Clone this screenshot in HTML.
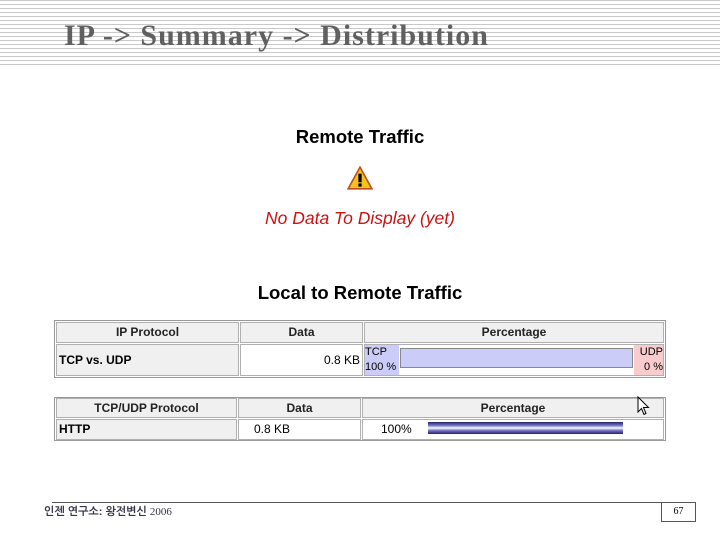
<!DOCTYPE html>
<html><head><style>
body{margin:0;width:720px;height:540px;background:#fff;position:relative;overflow:hidden;font-family:"Liberation Sans",sans-serif;}
.stripes{position:absolute;left:0;top:0;width:720px;height:66px;background:repeating-linear-gradient(to bottom,#c8c8c8 0,#c8c8c8 1px,#fff 1px,#fff 4px);}
.title{position:absolute;left:64px;top:18px;font-family:"Liberation Serif",serif;font-weight:bold;font-size:30px;letter-spacing:1px;color:#606060;line-height:36px;white-space:nowrap;}
.abs{position:absolute;}
.cell{position:absolute;box-sizing:border-box;border:1px solid #b0b0b0;font-size:12px;white-space:nowrap;}
.hd{background:#f0f0f0;font-weight:bold;text-align:center;color:#222;}
</style></head><body>
<div class="stripes"></div>
<div class="title">IP -&gt; Summary -&gt; Distribution</div>
<div class="abs" style="left:0;width:720px;top:126px;text-align:center;font-weight:bold;font-size:18.5px;color:#000">Remote Traffic</div>
<svg class="abs" style="left:347px;top:166px" width="26" height="24" viewBox="0 0 24 22"><path d="M12 1 L23 21 L1 21 Z" fill="#f7c21d" stroke="#c0501c" stroke-width="1.5"/><rect x="10.5" y="7" width="3" height="8" fill="#000"/><rect x="10.5" y="16" width="3" height="3" fill="#000"/></svg>
<div class="abs" style="left:0;width:720px;top:208px;text-align:center;font-style:italic;font-size:17.5px;color:#cc1111">No Data To Display (yet)</div>
<div class="abs" style="left:0;width:720px;top:282px;text-align:center;font-weight:bold;font-size:18.5px;color:#000">Local to Remote Traffic</div>
<div class="abs" style="left:54px;top:320px;width:612px;height:58px;border:1px solid #999;box-sizing:border-box"></div>
<div class="cell hd" style="left:56px;top:322px;width:183px;height:21px;line-height:19px">IP Protocol</div>
<div class="cell hd" style="left:240px;top:322px;width:123px;height:21px;line-height:19px">Data</div>
<div class="cell hd" style="left:364px;top:322px;width:300px;height:21px;line-height:19px">Percentage</div>
<div class="cell" style="left:56px;top:344px;width:183px;height:32px;line-height:30px;font-weight:bold;padding-left:2px;background:#f0f0f0">TCP vs. UDP</div>
<div class="cell" style="left:240px;top:344px;width:123px;height:32px;line-height:30px;text-align:right;padding-right:2px">0.8 KB</div>
<div class="cell" style="left:364px;top:344px;width:300px;height:32px"></div>
<div class="abs" style="left:365px;top:345px;width:34px;height:30px;background:#ccccf8;font-size:11px;line-height:15px;white-space:nowrap">TCP<br>100 %</div>
<div class="abs" style="left:400px;top:348px;width:233px;height:20px;background:#ccccf8;border:1px solid #888;box-sizing:border-box"></div>
<div class="abs" style="left:634px;top:345px;width:29px;height:30px;background:#f8cccc;font-size:11px;line-height:15px;text-align:right;white-space:nowrap">UDP<br>0 %</div>
<div class="abs" style="left:54px;top:397px;width:612px;height:44px;border:1px solid #999;box-sizing:border-box"></div>
<div class="cell hd" style="left:56px;top:398px;width:181px;height:20px;line-height:18px">TCP/UDP Protocol</div>
<div class="cell hd" style="left:238px;top:398px;width:123px;height:20px;line-height:18px">Data</div>
<div class="cell hd" style="left:362px;top:398px;width:302px;height:20px;line-height:18px">Percentage</div>
<div class="cell" style="left:56px;top:419px;width:181px;height:21px;line-height:19px;font-weight:bold;padding-left:2px;background:#f0f0f0">HTTP</div>
<div class="cell" style="left:238px;top:419px;width:123px;height:21px;line-height:19px;padding-left:15px">0.8 KB</div>
<div class="cell" style="left:362px;top:419px;width:302px;height:21px;line-height:19px;padding-left:18px">100%</div>
<div class="abs" style="left:428px;top:422px;width:195px;height:12px;background:linear-gradient(#22226a,#7777cc 30%,#fff 50%,#7777cc 70%,#22226a)"></div>
<svg class="abs" style="left:637px;top:396px" width="14" height="20" viewBox="0 0 14 20"><path d="M1 1 L1 16 L4.5 12.5 L7 18.5 L9 17.5 L6.5 11.5 L11.5 11.5 Z" fill="#fff" stroke="#000" stroke-width="1"/></svg>
<div class="abs" style="left:52px;top:502px;width:610px;height:1px;background:#555"></div>
<div class="abs" style="left:44px;top:506px;font-size:11px;font-weight:bold;color:#334;white-space:nowrap;font-family:'Liberation Sans','NanumGothic',sans-serif">인젠 연구소: 왕전변신 <span style="font-weight:normal;font-family:'Liberation Serif',serif">2006</span></div>
<div class="abs" style="left:661px;top:502px;width:35px;height:20px;border:1px solid #555;box-sizing:border-box;font-size:10px;text-align:center;line-height:18px;font-family:'Liberation Serif',serif">67</div>
</body></html>
